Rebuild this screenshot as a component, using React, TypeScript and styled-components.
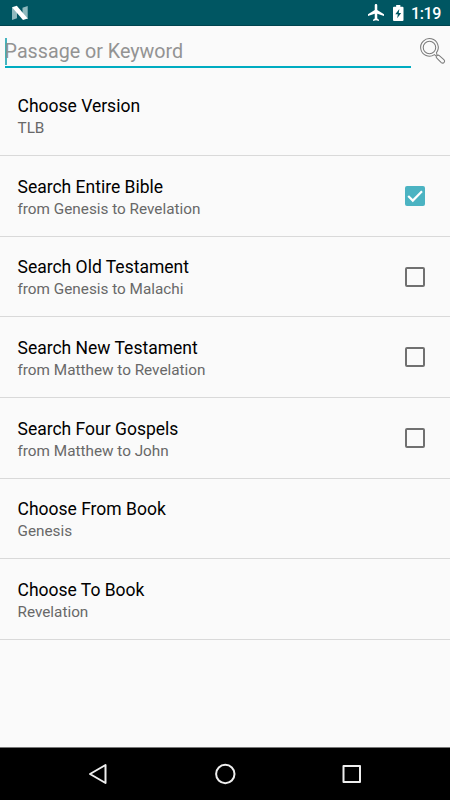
import React from "react";
import styled, { createGlobalStyle } from "styled-components";

const GlobalStyle = createGlobalStyle`
  * { box-sizing: border-box; }
  body { margin: 0; background: #fafafa; font-family: Roboto, "Noto Sans", sans-serif; }
`;

const Screen = styled.div`
  display: flex;
  flex-direction: column;
  width: 450px;
  height: 800px;
  overflow: hidden;
  background: #fafafa;
`;

const StatusBar = styled.header`
  display: flex;
  align-items: center;
  flex: none;
  height: 26px;
  padding: 0 9px 0 11px;
  background: #005662;
  border-bottom: 1px solid #00444f;
  color: #fff;
`;

const StatusIcons = styled.div`
  display: flex;
  align-items: center;
  gap: 8.5px;
  height: 26px;
  margin-left: auto;
`;

const Clock = styled.span`
  margin-left: -0.5px;
  padding-top: 2px;
  font-size: 16px;
  line-height: 26px;
  font-weight: 500;
  letter-spacing: -0.4px;
`;

const SearchBar = styled.div`
  display: flex;
  flex: none;
  height: 49.4px;
  padding: 11px 4px 0 4.6px;
`;

const Field = styled.div`
  display: flex;
  align-items: center;
  flex: none;
  width: 406px;
  height: 31px;
  border-bottom: 2px solid #00acc1;
`;

const Caret = styled.span`
  flex: none;
  width: 2px;
  height: 27px;
  margin-right: -2px;
  background: #45b3bf;
`;

const Placeholder = styled.span`
  font-size: 19.7px;
  line-height: 29px;
  color: #939393;
`;

const SearchButton = styled.div`
  flex: none;
  margin: 1.2px 0 0 9.3px;
`;

const List = styled.main`
  flex: 1;
`;

const Row = styled.div`
  display: flex;
  align-items: center;
  justify-content: space-between;
  height: 80.65px;
  padding: 0.7px 25px 0 17.5px;
  border-bottom: 1px solid #d9d9d9;
`;

const RowText = styled.div`
  display: flex;
  flex-direction: column;
  padding-top: 3.3px;
`;

const Title = styled.span`
  font-size: 17.5px;
  line-height: 23px;
  color: #000;
`;

const Subtitle = styled.span`
  font-size: 15.3px;
  line-height: 21px;
  color: #686868;
`;

const Check = styled.span<{ $checked: boolean }>`
  display: flex;
  width: 20px;
  height: 20px;
  border: 2px solid ${(p) => (p.$checked ? "#4bb3c2" : "#707070")};
  border-radius: 2px;
  background: ${(p) => (p.$checked ? "#4bb3c2" : "transparent")};
`;

const NavBar = styled.nav`
  display: flex;
  align-items: center;
  justify-content: space-between;
  flex: none;
  height: 53px;
  padding: 0 87px 0 86px;
  border-top: 1px solid #777;
  background: #000;
`;

const Svg = styled.svg`
  display: block;
  flex: none;
  overflow: visible;
`;

type Setting = { title: string; detail: string; checked?: boolean };

const settings: Setting[] = [
  { title: "Choose Version", detail: "TLB" },
  { title: "Search Entire Bible", detail: "from Genesis to Revelation", checked: true },
  { title: "Search Old Testament", detail: "from Genesis to Malachi", checked: false },
  { title: "Search New Testament", detail: "from Matthew to Revelation", checked: false },
  { title: "Search Four Gospels", detail: "from Matthew to John", checked: false },
  { title: "Choose From Book", detail: "Genesis" },
  { title: "Choose To Book", detail: "Revelation" },
];

const NougatIcon = () => (
  <Svg width="18" height="16" viewBox="0 0 18 16">
    <path d="M1 2.300l5 2.700v8.300l-5 1.700zM11.500 2.800l5.200-1.800v13.200l-5.200-3z" fill="#8fb9be" />
    <path d="M1 2.300l4.800-1.500L16.700 13.600 12 15z" fill="#fff" />
  </Svg>
);

const PlaneIcon = () => (
  <Svg width="16" height="17" viewBox="2 2 19 20" preserveAspectRatio="none">
    <path
      fill="#fff"
      d="M21 16v-2l-8-5V3.500c0-.83-.67-1.500-1.500-1.500S10 2.670 10 3.500V9l-8 5v2l8-2.500V19l-2 1.500V22l3.500-1 3.500 1v-1.500L13 19v-5.500z"
    />
  </Svg>
);

const BatteryIcon = () => (
  <Svg width="10.500" height="16" viewBox="0 0 10 16" preserveAspectRatio="none">
    <path fill="#fff" d="M3 0h4v1.700h2q1 0 1 1V15q0 1-1 1H1q-1 0-1-1V2.700q0-1 1-1h2z" />
    <path fill="#005662" d="M6 4L2.200 9.300h2.400L4 13.300 7.800 8H5.500z" />
  </Svg>
);

const Magnifier = () => (
  <Svg width="26.500" height="26.500" viewBox="0 0 28 28" fill="none" stroke="#7b7b7b" strokeWidth="1.100">
    <path d="M17.400 15.500a9.300 9.300 0 1 0-2.200 2.100l2 1.500c-.5 1.100-.1 1.700.8 2.500l4.500 4.300c1.100 1 2.200.8 3-.1s.7-2-.3-2.900l-4.800-4.200c-.8-.7-1.500-.8-2.300-.2z" />
    <circle cx="10" cy="10" r="6.600" />
  </Svg>
);

export default function App() {
  return (
    <Screen>
      <GlobalStyle />
      <StatusBar>
        <NougatIcon />
        <StatusIcons>
          <PlaneIcon />
          <BatteryIcon />
          <Clock>1:19</Clock>
        </StatusIcons>
      </StatusBar>
      <SearchBar>
        <Field>
          <Caret />
          <Placeholder>Passage or Keyword</Placeholder>
        </Field>
        <SearchButton>
          <Magnifier />
        </SearchButton>
      </SearchBar>
      <List>
        {settings.map((s) => (
          <Row key={s.title}>
            <RowText>
              <Title>{s.title}</Title>
              <Subtitle>{s.detail}</Subtitle>
            </RowText>
            {s.checked !== undefined && (
              <Check $checked={s.checked}>
                {s.checked && (
                  <Svg width="16" height="16" viewBox="0 0 16 16">
                    <path d="M1.200 8l4.600 4.600L15 3.300" fill="none" stroke="#fff" strokeWidth="2.200" />
                  </Svg>
                )}
              </Check>
            )}
          </Row>
        ))}
      </List>
      <NavBar>
        <Svg width="22" height="22" viewBox="0 0 22 22" fill="none" stroke="#eee" strokeWidth="2" strokeLinejoin="round">
          <path d="M4 11L19.500 2v18z" />
        </Svg>
        <Svg width="22" height="22" viewBox="0 0 22 22" fill="none" stroke="#eee" strokeWidth="2">
          <circle cx="11.300" cy="11" r="9.200" />
        </Svg>
        <Svg width="22" height="22" viewBox="0 0 22 22" fill="none" stroke="#eee" strokeWidth="2" strokeLinejoin="round">
          <path d="M2.500 3h16.500v16H2.500z" />
        </Svg>
      </NavBar>
    </Screen>
  );
}
